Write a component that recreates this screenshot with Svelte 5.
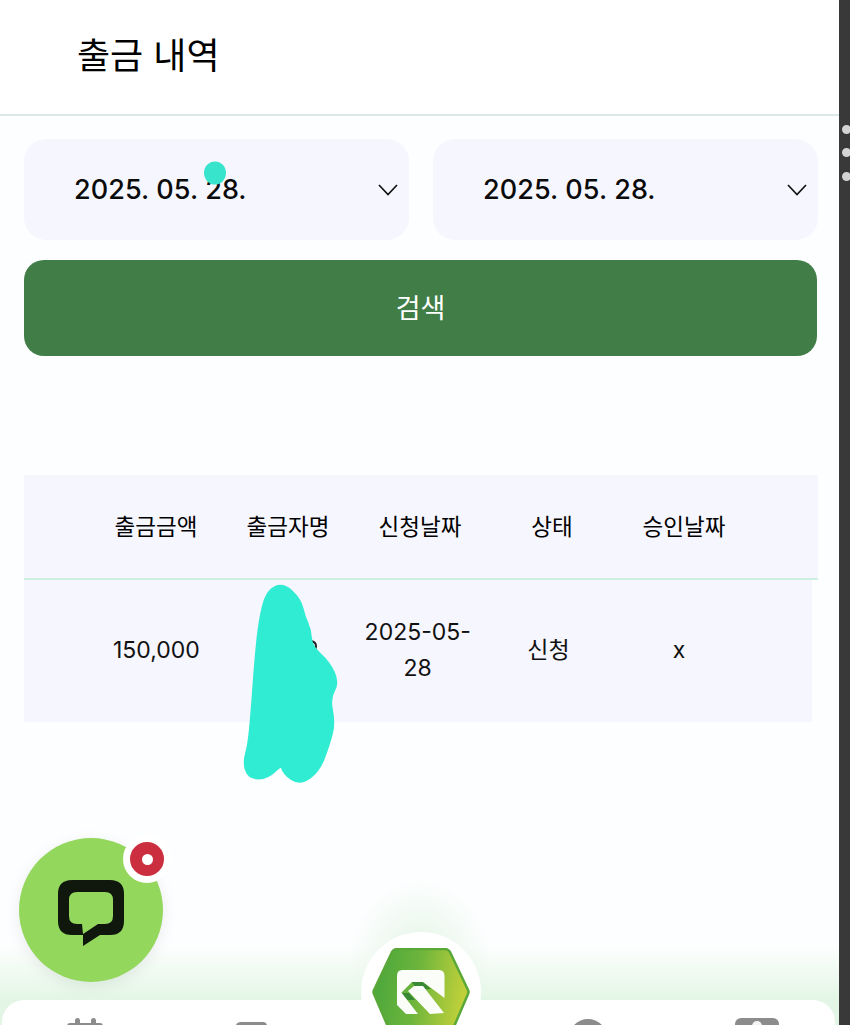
<script>
  const blob = [
    [283, 585], [299, 600], [303, 617], [309, 630], [310, 647], [328, 663], [337, 683], [328, 698],
    [333, 723], [328, 743], [318, 770], [300, 783], [285, 773], [282, 762], [267, 777], [250, 777],
    [245, 763], [250, 745], [253, 713], [257, 657], [261, 620], [268, 592]
  ];

  // smooth outline through the midpoints of the scribble
  const mid = (a, b) => [(a[0] + b[0]) / 2, (a[1] + b[1]) / 2];
  const start = mid(blob[blob.length - 1], blob[0]);
  const blobPath =
    `M${start[0]} ${start[1]} ` +
    blob.map((p, i) => {
      const m = mid(p, blob[(i + 1) % blob.length]);
      return `Q${p[0]} ${p[1]} ${m[0]} ${m[1]}`;
    }).join(' ') + ' Z';

  const headers = ['출금금액', '출금자명', '신청날짜', '상태', '승인날짜'];
</script>

<div class="screen">
  <main class="page">
    <header class="top">
      <h1>출금 내역</h1>
    </header>

    <section class="filters">
      <div class="dates">
        {#each [0, 1] as i (i)}
          <div class="date">
            <span>2025. 05. 28.</span>
            <svg width="22" height="14" viewBox="0 0 22 14" fill="none" stroke="#111" stroke-width="1.700">
              <path d="M2 2l9 9.500 9-9.500" />
            </svg>
          </div>
        {/each}
      </div>
      <button class="search">검색</button>
    </section>

    <section class="table">
      <div class="row head">
        {#each headers as h}
          <div>{h}</div>
        {/each}
      </div>
      <div class="row body">
        <div>150,000</div>
        <div></div>
        <div class="wrap">2025-05-28</div>
        <div>신청</div>
        <div>x</div>
      </div>
    </section>

    <nav class="tabs">
      <div class="tab">
        <svg width="40" height="30" viewBox="0 0 40 30" fill="#8c8c8c">
          <rect x="10" y="0" width="5" height="8" rx="2.500" />
          <rect x="26" y="0" width="5" height="8" rx="2.500" />
          <rect x="2" y="5" width="36" height="25" rx="3" />
        </svg>
      </div>
      <div class="tab">
        <svg width="40" height="30" viewBox="0 0 40 30" fill="#8c8c8c">
          <path d="M9 4h22q3 0 4 3v23H4V7q1-3 5-3z" />
        </svg>
      </div>
      <div class="tab"></div>
      <div class="tab shift">
        <svg width="40" height="30" viewBox="0 0 40 30" fill="#8c8c8c">
          <circle cx="20" cy="20" r="19" />
        </svg>
      </div>
      <div class="tab shift wide">
        <svg width="46" height="30" viewBox="0 0 46 30" fill="#8c8c8c">
          <rect x="1" y="0" width="44" height="30" rx="6" />
          <circle cx="23" cy="8" r="5" fill="#f4f4f4" />
        </svg>
      </div>
    </nav>
  </main>

  <aside class="rail">
    <i></i><i></i><i></i>
  </aside>

  <!-- scribbles the user painted over the screenshot -->
  <svg class="scribble" width="839" height="1025" viewBox="0 0 839 1025">
    <path d="M257 651h4M311 641q5 1 5 5t-4 6" fill="none" stroke="#222" stroke-width="2" />
    <path d={blobPath} fill="#2fecd2" stroke="#2fecd2" stroke-width="5" stroke-linejoin="round" />
    <ellipse cx="215" cy="173" rx="11" ry="11.500" fill="#38e4cc" />
  </svg>

  <div class="logo">
    <svg width="100" height="88" viewBox="0 0 100 88">
      <defs>
        <linearGradient id="hex" x1="0" y1="0" x2="1" y2="0.150">
          <stop offset="0" stop-color="#46a53b" />
          <stop offset="0.500" stop-color="#6db53c" />
          <stop offset="1" stop-color="#bfd03a" />
        </linearGradient>
      </defs>
      <path d="M26 1H74Q77 1 79 4L97 42Q98 44 97 46L79 88H21L3 46Q2 44 3 42L21 4Q23 1 26 1Z" fill="url(#hex)" stroke="#5aa838" stroke-width="2.500" />
      <path d="M41 34h11l8 7-14 1zM30 45h8l6 7-8 0z" fill="#3a8a35" />
      <path d="M31 22H68Q73.500 22 73.500 28V50L52 34H41L30 45H26V28Q26 22 31 22Z" fill="#fbfdf8" />
      <path d="M43 38H52L73 65L59 66L37 43Z" fill="#fbfdf8" />
      <path d="M26 44H30L47 66H35L26 57Z" fill="#fbfdf8" />
    </svg>
  </div>

  <div class="chat">
    <svg width="70" height="70" viewBox="0 0 70 70">
      <path fill-rule="evenodd" fill="#10170c" d="M16 2H54Q68 2 68 16V43Q68 57 54 57H44L27 68V57H16Q2 57 2 43V16Q2 2 16 2ZM21 14Q13 14 13 22V38Q13 46 21 46H26L27 56L42 46H49Q57 46 57 38V22Q57 14 49 14Z" />
    </svg>
    <span class="badge"><i></i></span>
  </div>
</div>

<style>
  :global(body) {
    margin: 0;
    background: #fff;
  }

  .screen {
    position: relative;
    display: flex;
    width: 850px;
    height: 1025px;
    overflow: hidden;
    font-family: Inter, "Noto Sans CJK KR", sans-serif;
    color: #111;
  }

  .page {
    display: flex;
    flex-direction: column;
    width: 839px;
    height: 1025px;
    overflow: hidden;
    background:
      radial-gradient(ellipse 70px 80px at 420px 960px, #e2f4e4 0%, rgba(226, 244, 228, 0) 100%),
      linear-gradient(to bottom, rgba(226, 246, 228, 0) 945px, #e3f6e5 1000px),
      #fdfeff;
  }

  .rail {
    position: relative;
    width: 11px;
    background: #393939;
  }

  .rail i {
    position: absolute;
    left: 3px;
    width: 9px;
    height: 9px;
    border-radius: 50%;
    background: #d4d4d4;
  }

  .rail i:nth-child(1) { top: 125px; }
  .rail i:nth-child(2) { top: 148px; }
  .rail i:nth-child(3) { top: 172px; }

  .top {
    box-sizing: border-box;
    height: 116px;
    flex-shrink: 0;
    padding: 33px 0 0 77px;
    background: #fff;
    border-bottom: 2px solid #dce8e6;
  }

  h1 {
    margin: 0;
    font-size: 36px;
    line-height: 46px;
    font-weight: 400;
    color: #000;
  }

  .filters {
    display: flex;
    flex-direction: column;
    gap: 20px;
    padding: 23px 21px 0 24px;
  }

  .dates {
    display: flex;
    gap: 24px;
  }

  .date {
    box-sizing: border-box;
    flex: 1;
    height: 101px;
    display: flex;
    align-items: center;
    justify-content: space-between;
    padding: 0 10px 0 50px;
    background: #f6f6fe;
    border-radius: 22px;
    font-size: 27px;
    letter-spacing: 0.080px;
    font-weight: 500;
    color: #0b0b0b;
  }

  .search {
    height: 96px;
    margin-right: 1px;
    padding-bottom: 5px;
    border: 0;
    border-radius: 20px;
    background: #417d47;
    color: #fff;
    font: 400 27px "Noto Sans CJK KR", sans-serif;
  }

  .table {
    margin: 119px 21px 0 24px;
  }

  .row {
    display: grid;
    text-align: center;
    align-items: center;
    background: #f6f6fe;
  }

  .head {
    grid-template-columns: repeat(5, 132px);
    box-sizing: border-box;
    height: 105px;
    padding: 0 0 4px 66px;
    border-bottom: 2px solid #cdeee0;
    font: 400 22.500px "Noto Sans CJK KR", sans-serif;
    color: #000;
  }

  .body {
    grid-template-columns: repeat(5, 130.700px);
    box-sizing: border-box;
    width: 788px;
    height: 142px;
    padding: 0 0 3px 67px;
    font: 400 23px/36px Inter, "Noto Sans CJK KR", sans-serif;
    color: #111;
  }

  .wrap {
    padding: 0 2px;
  }

  .tabs {
    display: grid;
    grid-template-columns: repeat(5, 1fr);
    box-sizing: border-box;
    margin: auto 4px 0 2px;
    height: 25px;
    flex-shrink: 0;
    overflow: hidden;
    padding-top: 18px;
    background: #fff;
    border-radius: 22px 22px 0 0;
  }

  .tab {
    display: flex;
    justify-content: center;
  }

  .shift {
    padding-left: 6px;
  }

  .wide {
    padding-left: 10px;
  }

  .scribble {
    position: absolute;
    left: 0;
    top: 0;
    pointer-events: none;
  }

  .logo {
    position: absolute;
    left: 361px;
    top: 932px;
    box-sizing: border-box;
    width: 120px;
    height: 120px;
    padding: 16px 0 0 10px;
    border-radius: 50%;
    background: #fff;
  }

  .chat {
    position: absolute;
    left: 19px;
    top: 838px;
    display: flex;
    align-items: center;
    justify-content: center;
    width: 144px;
    height: 144px;
    border-radius: 50%;
    background: #93d75d;
    box-shadow: 0 4px 16px rgba(0, 0, 0, 0.080);
  }

  .chat svg {
    margin-top: 6px;
  }

  .badge {
    position: absolute;
    left: 104px;
    top: -3px;
    display: flex;
    align-items: center;
    justify-content: center;
    width: 34px;
    height: 34px;
    border: 7px solid #fff;
    border-radius: 50%;
    background: #cb2f3f;
  }

  .badge i {
    width: 11px;
    height: 11px;
    border-radius: 50%;
    background: #fff;
  }
</style>
